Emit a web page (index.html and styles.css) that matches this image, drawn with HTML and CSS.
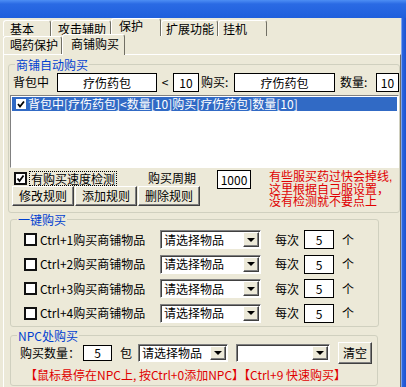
FILE: index.html
```html
<!DOCTYPE html>
<html lang="zh-CN">
<head>
  <meta charset="UTF-8">
  <title>保护 - 商铺购买</title>
  <link rel="stylesheet" href="styles.css">
</head>
<body>
<div class="window">
  <div class="titlebar"></div>
  <div class="frame">
    <div class="client">
      <!-- Back tab row -->
      <div class="tabrow back">
        <div class="tab t-basic">基本</div>
        <div class="tab t-attack">攻击辅助</div>
        <div class="tab t-guard active">保护</div>
        <div class="tab t-ext">扩展功能</div>
        <div class="tab t-idle">挂机</div>
      </div>
      <!-- Front tab row -->
      <div class="tabrow front">
        <div class="tab t-drink">喝药保护</div>
        <div class="tab t-shop active">商铺购买</div>
      </div>

      <div class="panel">
        <!-- Shop auto buy -->
        <fieldset class="group g-shop">
          <legend>商铺自动购买</legend>
          <div class="rule-row">
            <span class="lbl">背包中</span>
            <div class="edit e-item">疗伤药包</div>
            <span class="lbl lt">&lt;</span>
            <div class="edit e-num">10</div>
            <span class="lbl l-buy">购买:</span>
            <div class="edit e-item2">疗伤药包</div>
            <span class="lbl l-count">数量:</span>
            <div class="edit e-num2">10</div>
          </div>
          <div class="listbox">
            <div class="list-item selected">
              <span class="mini-check">
                <svg viewBox="0 0 10 10"><polyline points="2,5 4,7.5 8,2.5" /></svg>
              </span>
              <span>背包中[疗伤药包]&lt;数量[10]购买[疗伤药包]数量[10]</span>
            </div>
          </div>
          <div class="options">
            <div class="opt-left">
              <div class="opt-line">
                <span class="check">
                  <svg viewBox="0 0 9 9"><polyline points="1.5,4.5 3.5,7 7.5,1.5" /></svg>
                </span>
                <span class="focus">有购买速度检测</span>
                <span class="period">购买周期</span>
              </div>
              <div class="btns">
                <button class="btn b-rule">修改规则</button>
                <button class="btn b-rule">添加规则</button>
                <button class="btn b-rule">删除规则</button>
              </div>
            </div>
            <div class="edit e-period">1000</div>
            <div class="warn">
              <div>有些服买药过快会掉线,</div>
              <div>这里根据自己服设置，</div>
              <div>没有检测就不要点上</div>
            </div>
          </div>
        </fieldset>

        <!-- One-key buy -->
        <fieldset class="group g-quick">
          <legend>一键购买</legend>
          <div class="quick-list">
            <div class="quick-row">
              <span class="check empty"></span>
              <span class="quick-lbl">Ctrl+1购买商铺物品</span>
              <div class="combo c-quick"><span class="combo-text">请选择物品</span><span class="combo-arrow"></span></div>
              <span class="each">每次</span>
              <div class="edit e-each">5</div>
              <span class="unit">个</span>
            </div>
            <div class="quick-row">
              <span class="check empty"></span>
              <span class="quick-lbl">Ctrl+2购买商铺物品</span>
              <div class="combo c-quick"><span class="combo-text">请选择物品</span><span class="combo-arrow"></span></div>
              <span class="each">每次</span>
              <div class="edit e-each">5</div>
              <span class="unit">个</span>
            </div>
            <div class="quick-row">
              <span class="check empty"></span>
              <span class="quick-lbl">Ctrl+3购买商铺物品</span>
              <div class="combo c-quick"><span class="combo-text">请选择物品</span><span class="combo-arrow"></span></div>
              <span class="each">每次</span>
              <div class="edit e-each">5</div>
              <span class="unit">个</span>
            </div>
            <div class="quick-row">
              <span class="check empty"></span>
              <span class="quick-lbl">Ctrl+4购买商铺物品</span>
              <div class="combo c-quick"><span class="combo-text">请选择物品</span><span class="combo-arrow"></span></div>
              <span class="each">每次</span>
              <div class="edit e-each">5</div>
              <span class="unit">个</span>
            </div>
          </div>
        </fieldset>

        <!-- NPC buy -->
        <fieldset class="group g-npc">
          <legend>NPC处购买</legend>
          <div class="npc-row">
            <span class="npc-lbl">购买数量：</span>
            <div class="edit e-npc">5</div>
            <span class="bag">包</span>
            <div class="combo small c-npc1"><span class="combo-text">请选择物品</span><span class="combo-arrow"></span></div>
            <div class="combo small c-npc2"><span class="combo-text"></span><span class="combo-arrow"></span></div>
            <button class="btn b-clear">清空</button>
          </div>
          <div class="npc-tip">【鼠标悬停在NPC上, 按Ctrl+0添加NPC】【Ctrl+9 快速购买】</div>
        </fieldset>
      </div>
    </div>
    <div class="frame-edge"></div>
  </div>
</div>
</body>
</html>
```

FILE: styles.css
```css
/* Classic Windows XP dialog look */
* {
  box-sizing: border-box;
}

body {
  margin: 0;
  background: #ece9d8;
  font-family: "Noto Sans CJK SC", "Liberation Sans", sans-serif;
  font-size: 12px;
  line-height: 14px;
  color: #000;
}

.window {
  width: 406px;
  height: 387px;
  display: flex;
  flex-direction: column;
  overflow: hidden;
}

.titlebar {
  flex: none;
  height: 18px;
  background: linear-gradient(#4d8ef4, #2a6ae4 4px, #1f5fdc);
}

.frame {
  flex: 1;
  display: flex;
}

.client {
  width: 401px;
  background: #ece9d8;
  display: flex;
  flex-direction: column;
}

.frame-edge {
  flex: 1;
  background: linear-gradient(to right, #7aa2ee 0 1px, #2d66e0 1px, #1a53d0);
}

/* Tabs */
.tabrow {
  display: flex;
  align-items: flex-end;
  height: 18px;
  padding-left: 3px;
  position: relative;
}

.tab {
  height: 16px;
  line-height: 15px;
  padding-left: 6px;
  background: #ece9d8;
  border-top: 1px solid #fff;
  border-left: 1px solid #fff;
  border-right: 1px solid #716f64;
  border-radius: 3px 3px 0 0;
  white-space: nowrap;
}

.tab.active {
  height: 18px;
  line-height: 13px;
  position: relative;
  z-index: 1;
}

.t-basic { width: 48px; }
.t-attack { width: 60px; }
.t-guard { width: 50px; padding-left: 7px; }
.t-ext { width: 57px; padding-left: 4px; }
.t-idle { width: 49px; padding-left: 4px; }

.front .tab {
  height: 18px;
  line-height: 16px;
}

.front .tab.active {
  height: 21px;
  margin-bottom: -1px;
  line-height: 18px;
}

.t-drink { width: 59px; }
.t-shop { width: 63px; padding-left: 8px; }

/* Page panel */
.panel {
  flex: 1;
  margin-left: 3px;
  padding: 3px 0 0 4px;
  border-top: 1px solid #fff;
  border-left: 1px solid #fff;
  border-right: 1px solid #716f64;
}

.group {
  margin: 0;
  padding: 0;
  min-width: 0;
  border: 1px solid #d0d0bf;
  border-radius: 3px;
}

.group legend {
  margin-left: 6px;
  padding: 0 1px;
  color: #0040d0;
  line-height: 13px;
}

.g-shop {
  padding-bottom: 3px;
}

/* Edits, combos, buttons */
.edit {
  flex: none;
  height: 19px;
  line-height: 17px;
  background: #fff;
  border: 1px solid #000;
  text-align: center;
}

.combo {
  flex: none;
  display: flex;
  align-items: center;
  height: 19px;
  padding: 1px 1px 1px 3px;
  background: #fff;
  border-top: 1px solid #808080;
  border-left: 1px solid #808080;
  border-right: 1px solid #fff;
  border-bottom: 1px solid #fff;
  box-shadow: inset 1px 1px 0 #404040;
}

.combo.small {
  height: 18px;
}

.combo-text {
  flex: 1;
  white-space: nowrap;
}

.combo-arrow {
  flex: none;
  width: 16px;
  height: 100%;
  display: flex;
  align-items: center;
  justify-content: center;
  background: #ece9d8;
  border: 1px solid;
  border-color: #fff #404040 #404040 #fff;
  box-shadow: inset -1px -1px 0 #808080;
}

.combo-arrow::after {
  content: "";
  border-left: 4px solid transparent;
  border-right: 4px solid transparent;
  border-top: 4px solid #000;
}

.btn {
  flex: none;
  height: 20px;
  padding: 0;
  font: inherit;
  color: #000;
  background: #ece9d8;
  border: 1px solid;
  border-color: #fff #404040 #404040 #fff;
  box-shadow: inset -1px -1px 0 #808080;
}

.check {
  flex: none;
  width: 13px;
  height: 13px;
  background: #fff;
  border: 2px solid #111;
  display: flex;
}

.check svg, .mini-check svg {
  width: 100%;
  height: 100%;
  fill: none;
  stroke: #000;
  stroke-width: 1.8;
}

/* Shop rule row */
.rule-row {
  display: flex;
  align-items: center;
  height: 22px;
  padding-left: 4px;
}

.lbl {
  flex: none;
  white-space: nowrap;
}

.e-item { width: 100px; margin-left: 8px; }
.lt { width: 16px; text-align: center; }
.e-num { width: 26px; }
.l-buy { width: 33px; margin-left: 2px; }
.e-item2 { width: 101px; }
.l-count { width: 36px; margin-left: 5px; }
.e-num2 { width: 23px; }

.listbox {
  height: 73px;
  margin: 2px 0 0 1px;
  padding: 1px;
  background: #fff;
  border-top: 1px solid #808080;
  border-left: 1px solid #808080;
  border-right: 1px solid #fff;
  border-bottom: 1px solid #fff;
}

.list-item {
  display: flex;
  align-items: center;
  height: 14px;
  padding-left: 4px;
  white-space: nowrap;
}

.list-item.selected {
  background: #316ac5;
  color: #fff;
}

.mini-check {
  flex: none;
  width: 10px;
  height: 10px;
  margin-right: 2px;
  background: #fff;
  display: flex;
}

.options {
  display: flex;
  margin-top: 2px;
}

.opt-left {
  flex: none;
  width: 208px;
}

.opt-line {
  display: flex;
  align-items: center;
  height: 16px;
  padding-left: 5px;
}

.focus {
  margin-left: 3px;
  padding: 0 1px;
  line-height: 13px;
  outline: 1px dotted #000;
}

.period {
  margin-left: 32px;
}

.btns {
  display: flex;
  gap: 1px;
  padding-left: 3px;
}

.b-rule {
  width: 62px;
}

.e-period {
  width: 34px;
}

.warn {
  margin: 1px 0 0 18px;
  font-family: "Liberation Sans", "Noto Sans CJK SC", sans-serif;
  line-height: 12.5px;
  color: #e00000;
  white-space: nowrap;
}

/* One-key buy */
.g-quick {
  width: 369px;
  margin-left: 2px;
}

.quick-list {
  padding-top: 2px;
}

.quick-row {
  display: flex;
  align-items: center;
  height: 24.5px;
}

.quick-row .check {
  margin-left: 13px;
}

.quick-lbl {
  flex: none;
  width: 120px;
  margin-left: 3px;
  white-space: nowrap;
}

.c-quick { width: 101px; }
.each { margin-left: 14px; }
.e-each { width: 30px; margin-left: 5px; }
.unit { margin-left: 8px; }

/* NPC buy */
.g-npc {
  width: 368px;
  margin: 3px 0 0 2px;
  padding-bottom: 3px;
}

.g-npc legend {
  line-height: 12px;
}

.npc-row {
  display: flex;
  align-items: center;
  height: 22px;
}

.npc-lbl {
  width: 60px;
  margin-left: 9px;
  white-space: nowrap;
}

.e-npc { width: 29px; height: 16px; line-height: 14px; margin-left: 3px; }
.bag { margin-left: 8px; }
.c-npc1 { width: 90px; margin-left: 6px; }
.c-npc2 { width: 94px; margin-left: 8px; }
.b-clear { width: 34px; height: 22px; margin-left: 8px; }

.npc-tip {
  margin: 4px 0 0 14px;
  line-height: 14px;
  color: #e00000;
  white-space: nowrap;
}
```
